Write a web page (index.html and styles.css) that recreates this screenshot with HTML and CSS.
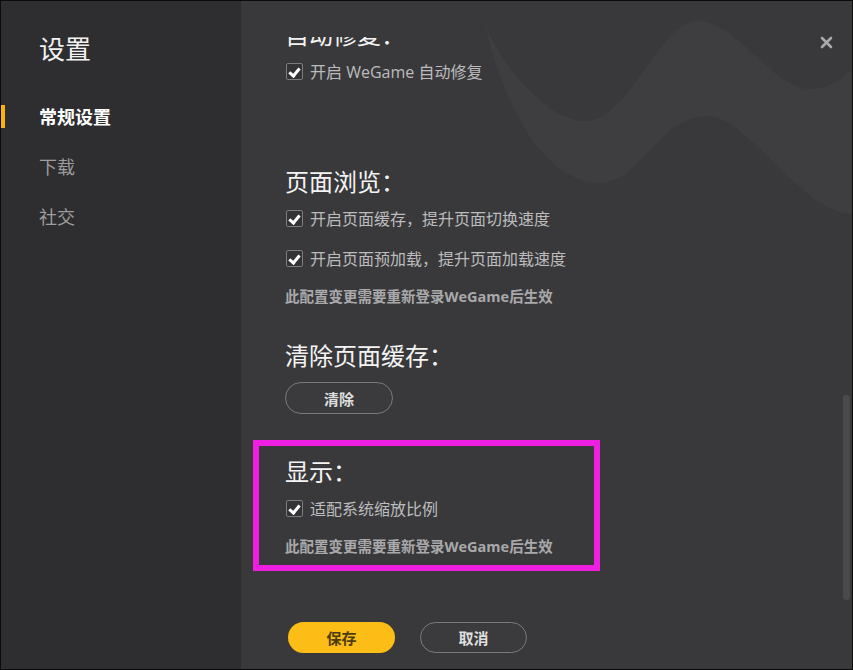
FILE: index.html
```html
<!DOCTYPE html>
<html lang="zh-CN">
<head>
    <meta charset="UTF-8">
    <meta name="viewport" content="width=device-width, initial-scale=1.0">
    <title>设置 - WeGame</title>
    <link rel="stylesheet" href="styles.css">
</head>
<body>

    <div class="window">
        <!-- Menu de gauche -->
        <aside class="sidebar">
            <h1 class="sidebar-title">设置</h1>
            <nav class="nav">
                <a href="#" class="nav-item active">常规设置</a>
                <a href="#" class="nav-item">下载</a>
                <a href="#" class="nav-item">社交</a>
            </nav>
        </aside>

        <main class="panel">
            <svg class="waves" viewBox="0 0 611 670" width="611" height="670" aria-hidden="true">
                <path d="M244 24 C259 60 304 120 344 120 C389 120 419 20 456 20 C499 20 529 88 571 88 C589 88 604 75 612 68 L612 213 C559 213 509 115 466 115 C419 115 399 182 359 182 C309 182 267 120 244 24 Z" fill="#3e3e40"/>
            </svg>

            <button class="close" title="关闭">
                <svg viewBox="0 0 13 13" width="13" height="13">
                    <path d="M2 2 L11 11 M11 2 L2 11" stroke="#a9a9a9" stroke-width="2.6" stroke-linecap="round"/>
                </svg>
            </button>

            <div class="scroll">
                <div class="scroll-inner">
                    <!-- Section : réparation -->
                    <section class="section section-first">
                        <h2 class="section-title">自动修复：</h2>
                        <label class="check-row"><span class="checkbox"></span>开启 WeGame 自动修复</label>
                    </section>

                    <!-- Section : navigation -->
                    <section class="section section-browse">
                        <h2 class="section-title">页面浏览：</h2>
                        <label class="check-row"><span class="checkbox"></span>开启页面缓存，提升页面切换速度</label>
                        <label class="check-row"><span class="checkbox"></span>开启页面预加载，提升页面加载速度</label>
                        <p class="note">此配置变更需要重新登录WeGame后生效</p>
                    </section>

                    <!-- Section : cache -->
                    <section class="section section-cache">
                        <h2 class="section-title">清除页面缓存：</h2>
                        <button class="btn btn-outline btn-clear">清除</button>
                    </section>

                    <!-- Section : affichage -->
                    <section class="section highlight">
                        <h2 class="section-title">显示：</h2>
                        <label class="check-row"><span class="checkbox"></span>适配系统缩放比例</label>
                        <p class="note">此配置变更需要重新登录WeGame后生效</p>
                    </section>
                </div>
                <div class="scroll-thumb"></div>
            </div>

            <div class="actions">
                <button class="btn btn-primary">保存</button>
                <button class="btn btn-outline">取消</button>
            </div>
        </main>
    </div>

</body>
</html>
```

FILE: styles.css
```css
body {
    margin: 0;
    padding: 0;
    background-color: #000000;
    font-family: "Open Sans", "Noto Sans CJK SC", sans-serif;
}
.window {
    display: flex;
    width: 853px;
    height: 670px;
    box-sizing: border-box;
    border: 1px solid #0b0b0c;
    overflow: hidden;
}
.sidebar {
    width: 240px;
    flex: none;
    background-color: #2e2e30;
}
.sidebar-title {
    margin: 30px 0 0 38px;
    font-size: 26px;
    line-height: 36px;
    font-weight: normal;
    color: #f2f2f2;
}
.nav {
    display: flex;
    flex-direction: column;
    margin-top: 25px;
}
.nav-item {
    position: relative;
    display: block;
    height: 50px;
    line-height: 50px;
    padding-left: 38px;
    font-size: 18px;
    color: #9d9d9f;
    text-decoration: none;
}
.nav-item.active {
    color: #ffffff;
    font-weight: bold;
}
.nav-item.active::before {
    content: "";
    position: absolute;
    left: 0;
    top: 13px;
    width: 4px;
    height: 23px;
    background-color: #fbb40f;
}
.panel {
    position: relative;
    flex: 1;
    display: flex;
    flex-direction: column;
    padding-top: 36px;
    background-color: #39393b;
}
.waves {
    position: absolute;
    left: 0;
    top: 0;
    pointer-events: none;
}
.close {
    position: absolute;
    top: 35px;
    right: 19px;
    width: 13px;
    height: 13px;
    padding: 0;
    border: none;
    background: none;
    cursor: pointer;
}
.close svg {
    display: block;
}
.scroll {
    position: relative;
    height: 563px;
    flex: none;
    overflow: hidden;
}
.scroll-inner {
    margin-top: -18px;
    padding-left: 44px;
}
.scroll-thumb {
    position: absolute;
    right: 2px;
    bottom: 0;
    width: 7px;
    height: 205px;
    border-radius: 3px;
    background-color: #4a4a4c;
}
.section {
    margin: 0;
}
.section-first {
    margin-bottom: 75px;
}
.section-browse {
    margin-bottom: 33px;
}
.section-cache {
    margin-bottom: 42px;
}
.section-title {
    margin: 0;
    font-size: 24px;
    line-height: 32px;
    font-weight: normal;
    color: #f4f4f4;
}
.check-row {
    display: flex;
    align-items: center;
    height: 40px;
    font-size: 16px;
    color: #bcbcbe;
    cursor: pointer;
}
.checkbox {
    position: relative;
    width: 15px;
    height: 15px;
    margin: 0 7px 0 1px;
    border: 1px solid #7c7c7e;
    border-radius: 2px;
    background-color: #333335;
}
.checkbox::after {
    content: "";
    position: absolute;
    left: 4px;
    top: 2px;
    width: 4px;
    height: 8px;
    border: solid #ffffff;
    border-width: 0 3px 3px 0;
    transform: rotate(40deg);
}
.note {
    margin: 9px 0 0;
    font-size: 14.5px;
    line-height: 20px;
    font-weight: bold;
    color: #a9a9ab;
}
.btn {
    width: 107px;
    height: 31px;
    border-radius: 16px;
    font-family: inherit;
    font-size: 15px;
    font-weight: bold;
    cursor: pointer;
}
.btn-clear {
    display: block;
    width: 108px;
    height: 32px;
    margin-top: 10px;
}
.btn-outline {
    border: 1px solid #7a7a7c;
    background-color: #3b3b3d;
    color: #dedede;
}
.btn-primary {
    border: none;
    background-color: #fbbd16;
    color: #4e3c0e;
}
.highlight {
    position: relative;
}
.highlight::after {
    content: "";
    position: absolute;
    left: -32px;
    top: -16px;
    width: 347px;
    height: 131px;
    box-sizing: border-box;
    border: 6px solid #ee1fe0;
    pointer-events: none;
}
.actions {
    display: flex;
    gap: 25px;
    padding: 22px 0 0 47px;
}
```
